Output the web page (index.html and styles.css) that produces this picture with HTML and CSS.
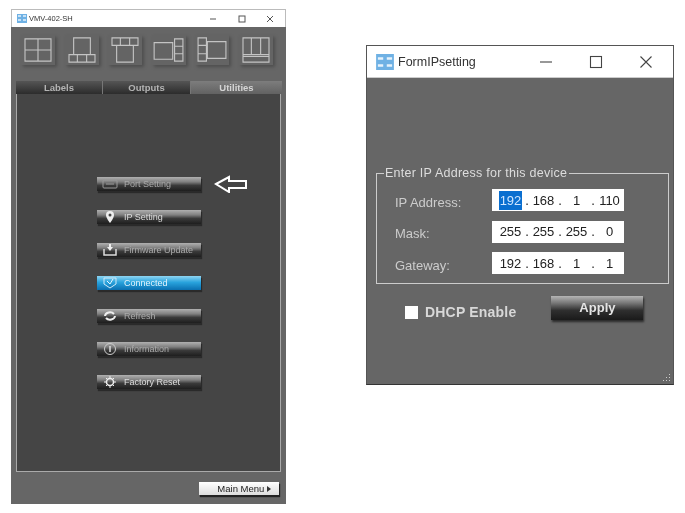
FILE: index.html
```html
<!DOCTYPE html>
<html lang="en">
<head>
<meta charset="utf-8">
<title>VMV-402-SH</title>
<link rel="stylesheet" href="styles.css">
</head>
<body>
<section class="win main-win">
  <header class="titlebar small">
    <svg class="app-icon" viewBox="0 0 10 9"><rect width="10" height="9" fill="#6fb1e4"/><path d="M1 2h3M6 2h3M1 6h3M6 6h3" stroke="#e6f2fb" stroke-width="1.6"/></svg>
    <span class="title">VMV-402-SH</span>
    <span class="controls">
      <svg viewBox="0 0 10 10"><path d="M2 5h6" stroke="#555"/></svg>
      <svg viewBox="0 0 10 10"><rect x="2" y="2" width="6" height="6" fill="none" stroke="#555"/></svg>
      <svg viewBox="0 0 10 10"><path d="M2 2l6 6M8 2l-6 6" stroke="#555"/></svg>
    </span>
  </header>
  <div class="main-body">
    <div class="presets">
      <div class="preset"><svg viewBox="0 0 30 28"><path d="M1 2h28v24H1zM15 2v24M1 14h28"/></svg></div>
      <div class="preset"><svg viewBox="0 0 30 28"><path d="M6 1h18v18H6zM1 19h28v8H1zM10 19v8M20 19v8"/></svg></div>
      <div class="preset"><svg viewBox="0 0 30 28"><path d="M1 1h28v8H1zM10 1v8M20 1v8M6 9h18v18H6z"/></svg></div>
      <div class="preset"><svg viewBox="0 0 34 28"><path d="M1 6h20v18H1zM23 2h9v8h-9zM23 10h9v8h-9zM23 18h9v8h-9z"/></svg></div>
      <div class="preset"><svg viewBox="0 0 34 28"><path d="M2 1h9v8H2zM2 9h9v9H2zM2 18h9v8H2zM12 5h20v18H12z"/></svg></div>
      <div class="preset"><svg viewBox="0 0 30 28"><path d="M1 1h28v26H1zM1 19h28M1 21h28M10 1v18M20 1v18"/></svg></div>
    </div>
    <nav class="tabs">
      <span class="tab">Labels</span>
      <span class="tab">Outputs</span>
      <span class="tab active">Utilities</span>
    </nav>
    <div class="panel">
      <div class="port-row">
        <button class="btn dim"><svg class="ico" viewBox="0 0 16 10"><rect x="1" y="1" width="14" height="8" rx="1" fill="none" stroke="#999"/><path d="M4 5h8" stroke="#999"/></svg><span>Port Setting</span></button>
        <svg class="arrow" viewBox="0 0 34 18"><path d="M2 9l13-7v4h17v7H15v4z" fill="none" stroke="#fff" stroke-width="2"/></svg>
      </div>
      <button class="btn"><svg class="ico" viewBox="0 0 16 12"><path d="M8 0a4 4 0 0 1 4 4c0 3-4 8-4 8s-4-5-4-8a4 4 0 0 1 4-4z" fill="#eee"/><circle cx="8" cy="4" r="1.5" fill="#444"/></svg><span>IP Setting</span></button>
      <button class="btn dim"><svg class="ico" viewBox="0 0 16 12"><path d="M2 5v6h12V5" fill="none" stroke="#ddd" stroke-width="1.5"/><path d="M5 3h2V0h2v3h2L8 7z" fill="#eee"/></svg><span>Firmware Update</span></button>
      <button class="btn on"><svg class="ico" viewBox="0 0 16 12"><path d="M2 1h12v6l-6 4-6-4z" fill="none" stroke="#cfe9f8"/><path d="M5 4l3 3 3-5" fill="none" stroke="#e8f6ff"/></svg><span>Connected</span></button>
      <button class="btn dim"><svg class="ico" viewBox="0 0 16 12"><path d="M3 6a5 4 0 0 1 9-2M13 6a5 4 0 0 1-9 2" fill="none" stroke="#eee" stroke-width="2"/></svg><span>Refresh</span></button>
      <button class="btn dim"><svg class="ico" viewBox="0 0 16 12"><circle cx="8" cy="6" r="5.5" fill="none" stroke="#ccc"/><path d="M8 3v6" stroke="#ddd" stroke-width="1.5"/></svg><span>Information</span></button>
      <button class="btn"><svg class="ico" viewBox="0 0 16 12"><circle cx="8" cy="6" r="3.5" fill="none" stroke="#eee" stroke-width="1.5"/><path d="M8 0v2M8 10v2M2 6h2M12 6h2M4 2l1 1M12 2l-1 1M4 10l1-1M12 10l-1-1" stroke="#eee"/></svg><span>Factory Reset</span></button>
    </div>
    <div class="main-foot"><button class="menu-btn">Main Menu <span class="caret"></span></button></div>
  </div>
</section>

<section class="win ip-win">
  <header class="titlebar large">
    <svg class="app-icon" viewBox="0 0 10 9"><rect width="10" height="9" fill="#6fb1e4"/><path d="M1 2.5h3M6 2.5h3M1 6.5h3M6 6.5h3" stroke="#e6f2fb" stroke-width="1.4"/></svg>
    <span class="title">FormIPsetting</span>
    <span class="controls">
      <svg viewBox="0 0 14 14"><path d="M1 7h12" stroke="#444" stroke-width="1.1"/></svg>
      <svg viewBox="0 0 14 14"><rect x="1.5" y="1.5" width="11" height="11" fill="none" stroke="#444" stroke-width="1.1"/></svg>
      <svg viewBox="0 0 14 14"><path d="M1.5 1.5l11 11M12.5 1.5l-11 11" stroke="#444" stroke-width="1.1"/></svg>
    </span>
  </header>
  <div class="ip-body">
    <fieldset class="group">
      <legend>Enter IP Address for this device</legend>
      <div class="field"><label>IP Address:</label><div class="ipbox"><span><mark>192</mark></span><i>.</i><span>168</span><i>.</i><span>1</span><i>.</i><span>110</span></div></div>
      <div class="field"><label>Mask:</label><div class="ipbox"><span>255</span><i>.</i><span>255</span><i>.</i><span>255</span><i>.</i><span>0</span></div></div>
      <div class="field"><label>Gateway:</label><div class="ipbox"><span>192</span><i>.</i><span>168</span><i>.</i><span>1</span><i>.</i><span>1</span></div></div>
    </fieldset>
    <div class="ip-actions">
      <span class="check"></span><span class="dhcp">DHCP Enable</span>
      <button class="apply">Apply</button>
    </div>
    <svg class="grip" viewBox="0 0 9 9"><path d="M7 1h1v1H7zM4 4h1v1H4zM7 4h1v1H7zM1 7h1v1H1zM4 7h1v1H4zM7 7h1v1H7z" fill="#ccc"/></svg>
  </div>
</section>
</body>
</html>
```

FILE: styles.css
```css
* { box-sizing: border-box; }
html, body { margin: 0; width: 685px; height: 513px; overflow: hidden; background: #fff; }
body { position: relative; font-family: "Liberation Sans", Arial, sans-serif; }
button { font-family: inherit; padding: 0; border: 0; }

.win { position: absolute; display: flex; flex-direction: column; }
.main-win { left: 11px; top: 9px; width: 275px; height: 495px; filter: blur(0.6px); }
.ip-win { left: 366px; top: 45px; width: 308px; height: 340px; border: 1px solid #555; border-bottom-color: #333; filter: blur(0.4px); }

.titlebar { display: flex; align-items: center; background: #fff; flex: none; color: #333; }
.titlebar.small { height: 18px; padding-left: 5px; border: 1px solid #bbb; border-bottom: 0; font-size: 7.5px; }
.titlebar.large { height: 32px; padding-left: 9px; font-size: 12.5px; border-bottom: 1px solid #ccc; }
.titlebar .controls { margin-left: auto; display: flex; align-items: center; }
.titlebar.small .app-icon { width: 10px; height: 9px; margin-right: 2px; }
.titlebar.large .app-icon { width: 18px; height: 16px; margin-right: 4px; }
.titlebar.small .controls { gap: 18.5px; padding-right: 10px; }
.titlebar.small .controls svg { width: 10px; height: 10px; }
.titlebar.large .controls { gap: 36px; padding-right: 20px; }
.titlebar.large .controls svg { width: 14px; height: 14px; }

.main-body { flex: 1; display: flex; flex-direction: column; background: #666; padding: 8px 4px 0 5px; }
.presets { display: flex; justify-content: space-between; height: 30px; padding: 0 9px 0 5px; }
.preset { width: 34px; height: 30px; display: flex; align-items: center; justify-content: center; background: #646464; box-shadow: 2px 2px 3px #4e4e4e; }
.preset svg { width: 32px; height: 26px; fill: none; stroke: #c4c4c4; stroke-width: 1.2; }

.tabs { display: grid; grid-template-columns: 87px 88px 91px; margin-top: 16px; height: 13px; }
.tab { text-align: center; font-size: 9.5px; font-weight: bold; line-height: 13px; color: #b4b4b4; background: linear-gradient(#555, #2c2c2c); border-right: 1px solid #777; }
.tab.active { background: linear-gradient(#7d7d7d, #626262); color: #d4d4d4; border-right: 0; }

.panel { height: 378px; width: 265px; background: #454545; border: 1px solid #aaa; border-top: 0; padding: 83px 0 0 80px; display: flex; flex-direction: column; gap: 19px; align-items: flex-start; }
.port-row { display: flex; align-items: center; gap: 13px; height: 14px; }
.btn { width: 104px; height: 14px; flex: none; display: flex; align-items: center; padding-left: 5px; gap: 6px; font-size: 9px; color: #ddd; background: linear-gradient(#b0b0b0 0, #808080 35%, #3a3a3a 60%, #1e1e1e 100%); box-shadow: 1px 2px 1px #2a2a2a; }
.btn span { white-space: nowrap; }
.btn.dim { color: #aaa; }
.btn.on { background: linear-gradient(#8fd5f2 0, #29a3dd 45%, #0a6fb0 100%); color: #e3f3fc; }
.ico { width: 16px; height: 12px; flex: none; }
.arrow { width: 34px; height: 18px; flex: none; }

.main-foot { display: flex; justify-content: flex-end; padding: 10px 3px 0 0; }
.menu-btn { width: 80px; height: 13px; font-size: 9.5px; color: #222; text-align: right; padding-right: 8px; background: linear-gradient(#fff, #ddd); box-shadow: 1px 2px 1px #222; }
.caret { display: inline-block; border-left: 4px solid #333; border-top: 3px solid transparent; border-bottom: 3px solid transparent; }

.ip-body { position: relative; flex: 1; background: #666; padding: 88px 5px 0 9px; color: #ddd; }
.group { margin: 0; width: 293px; height: 118px; border: 1px solid #ccc; padding: 9px 0 0 18px; display: flex; flex-direction: column; }
.group legend { font-size: 12.5px; padding: 0 2px 0 1px; margin-left: -11px; color: #ddd; letter-spacing: 0.25px; line-height: 14px; }
.field { display: flex; align-items: center; height: 22px; margin-bottom: 9.5px; font-size: 13px; color: #ccc; }
.field label { width: 97px; padding-top: 4px; }
.ipbox { width: 132px; height: 22px; background: #fff; display: flex; align-items: center; padding-left: 6px; color: #222; font-size: 13px; }
.ipbox span { width: 25px; text-align: center; }
.ipbox i { width: 8px; font-style: normal; text-align: center; }
mark { background: #0a6fd0; color: #cfe6ff; padding: 2px 1px; }

.ip-actions { display: flex; align-items: center; padding: 12px 0 0 29px; }
.check { width: 13px; height: 13px; background: #fff; margin-top: 8px; }
.dhcp { margin: 8px 0 0 7px; font-size: 14px; font-weight: bold; color: #d8d8d8; letter-spacing: 0.2px; }
.apply { margin-left: 35px; width: 92px; height: 24px; font-size: 13px; font-weight: bold; color: #e4e4e4; padding-bottom: 2px; background: linear-gradient(#b5b5b5 0, #7a7a7a 28%, #2f2f2f 60%, #1a1a1a 100%); box-shadow: 1px 2px 2px #2a2a2a; }
.grip { position: absolute; right: 2px; bottom: 2px; width: 9px; height: 9px; }
```
